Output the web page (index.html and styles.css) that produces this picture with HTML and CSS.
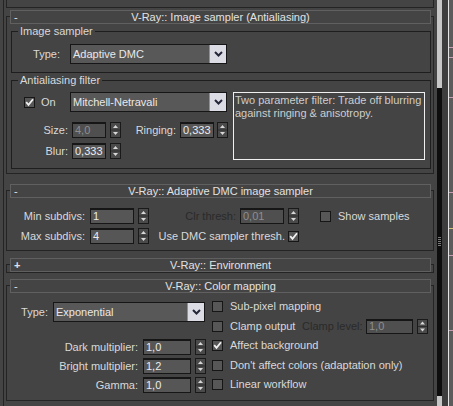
FILE: index.html
```html
<!DOCTYPE html>
<html>
<head>
<meta charset="utf-8">
<title>V-Ray rollouts</title>
<link rel="stylesheet" href="styles.css">
</head>
<body>
<div class="gutter"></div>
<div class="vline"></div>
<div class="panel">
  <div class="prev"></div>

  <section class="rollout r1">
    <div class="rtitle"><span class="sign">-</span><span>V-Ray:: Image sampler (Antialiasing)</span><span></span></div>
    <div class="group g1">
      <div class="glabel">Image sampler</div>
      <div class="row typerow">
        <span class="lbl l-type1">Type:</span>
        <div class="dd dd1"><span class="ddtext">Adaptive DMC</span><span class="ddbtn"><svg width="9" height="6" viewBox="0 0 9 6"><path d="M1 1 L4.5 4.5 L8 1" fill="none" stroke="#25253a" stroke-width="2"/></svg></span></div>
      </div>
    </div>
    <div class="group g2">
      <div class="glabel">Antialiasing filter</div>
      <div class="aa">
        <div class="aaleft">
          <div class="row onrow">
            <span class="cb cb-on"><svg width="9" height="9" viewBox="0 0 9 9"><path d="M1.2 4.2 L3.5 6.8 L8 1.2" fill="none" stroke="#f2f2f2" stroke-width="1.8"/></svg></span>
            <span class="onlbl">On</span>
            <div class="dd dd2"><span class="ddtext">Mitchell-Netravali</span><span class="ddbtn"><svg width="9" height="6" viewBox="0 0 9 6"><path d="M1 1 L4.5 4.5 L8 1" fill="none" stroke="#25253a" stroke-width="2"/></svg></span></div>
          </div>
          <div class="row numrow sizerow">
            <span class="lbl l-size">Size:</span>
            <span class="num dis w34">4,0</span>
            <svg class="spin sp-4" width="11" height="16" viewBox="0 0 11 16"><rect x="0.5" y="0.5" width="10" height="15" fill="#4a4a4a" stroke="#1a1a1a"/><line x1="1" y1="8" x2="10" y2="8" stroke="#2c2c2c"/><path d="M5.5 3 L8 6 L3 6 Z" fill="#d8d8d8"/><path d="M3 10 L8 10 L5.5 13 Z" fill="#d8d8d8"/></svg>
            <span class="lbl l-ring">Ringing:</span>
            <span class="num w34">0,333</span>
            <svg class="spin sp-3" width="11" height="16" viewBox="0 0 11 16"><rect x="0.5" y="0.5" width="10" height="15" fill="#4a4a4a" stroke="#1a1a1a"/><line x1="1" y1="8" x2="10" y2="8" stroke="#2c2c2c"/><path d="M5.5 3 L8 6 L3 6 Z" fill="#d8d8d8"/><path d="M3 10 L8 10 L5.5 13 Z" fill="#d8d8d8"/></svg>
          </div>
          <div class="row numrow blurrow">
            <span class="lbl l-size">Blur:</span>
            <span class="num w34">0,333</span>
            <svg class="spin sp-4" width="11" height="16" viewBox="0 0 11 16"><rect x="0.5" y="0.5" width="10" height="15" fill="#4a4a4a" stroke="#1a1a1a"/><line x1="1" y1="8" x2="10" y2="8" stroke="#2c2c2c"/><path d="M5.5 3 L8 6 L3 6 Z" fill="#d8d8d8"/><path d="M3 10 L8 10 L5.5 13 Z" fill="#d8d8d8"/></svg>
          </div>
        </div>
        <div class="desc">Two parameter filter: Trade off blurring<br>against ringing &amp; anisotropy.</div>
      </div>
    </div>
  </section>

  <section class="rollout r2">
    <div class="rtitle"><span class="sign">-</span><span>V-Ray:: Adaptive DMC image sampler</span><span></span></div>
    <div class="row numrow minrow">
      <span class="lbl l-sub">Min subdivs:</span>
      <span class="num w44">1</span>
      <svg class="spin sp-4" width="11" height="16" viewBox="0 0 11 16"><rect x="0.5" y="0.5" width="10" height="15" fill="#4a4a4a" stroke="#1a1a1a"/><line x1="1" y1="8" x2="10" y2="8" stroke="#2c2c2c"/><path d="M5.5 3 L8 6 L3 6 Z" fill="#d8d8d8"/><path d="M3 10 L8 10 L5.5 13 Z" fill="#d8d8d8"/></svg>
      <span class="lbl l-clr dislbl">Clr thresh:</span>
      <span class="num dis w44">0,01</span>
      <svg class="spin sp-4" width="11" height="16" viewBox="0 0 11 16"><rect x="0.5" y="0.5" width="10" height="15" fill="#4a4a4a" stroke="#1a1a1a"/><line x1="1" y1="8" x2="10" y2="8" stroke="#2c2c2c"/><path d="M5.5 3 L8 6 L3 6 Z" fill="#d8d8d8"/><path d="M3 10 L8 10 L5.5 13 Z" fill="#d8d8d8"/></svg>
      <span class="cb cb-show"></span>
      <span class="cblbl">Show samples</span>
    </div>
    <div class="row numrow maxrow">
      <span class="lbl l-sub">Max subdivs:</span>
      <span class="num w44">4</span>
      <svg class="spin sp-4" width="11" height="16" viewBox="0 0 11 16"><rect x="0.5" y="0.5" width="10" height="15" fill="#4a4a4a" stroke="#1a1a1a"/><line x1="1" y1="8" x2="10" y2="8" stroke="#2c2c2c"/><path d="M5.5 3 L8 6 L3 6 Z" fill="#d8d8d8"/><path d="M3 10 L8 10 L5.5 13 Z" fill="#d8d8d8"/></svg>
      <span class="lbl l-dmc">Use DMC sampler thresh.</span>
      <span class="cb cb-dmc"><svg width="9" height="9" viewBox="0 0 9 9"><path d="M1.2 4.2 L3.5 6.8 L8 1.2" fill="none" stroke="#f2f2f2" stroke-width="1.8"/></svg></span>
    </div>
  </section>

  <section class="rollout r3">
    <div class="rtitle"><span class="sign plus">+</span><span>V-Ray:: Environment</span><span></span></div>
  </section>

  <section class="rollout r4">
    <div class="rtitle"><span class="sign">-</span><span>V-Ray:: Color mapping</span><span></span></div>
    <div class="cm">
      <div class="cmleft">
        <div class="row typerow2">
          <span class="lbl l-type2">Type:</span>
          <div class="dd dd3"><span class="ddtext">Exponential</span><span class="ddbtn"><svg width="9" height="6" viewBox="0 0 9 6"><path d="M1 1 L4.5 4.5 L8 1" fill="none" stroke="#25253a" stroke-width="2"/></svg></span></div>
        </div>
        <div class="row numrow mrow first">
          <span class="lbl l-mult">Dark multiplier:</span>
          <span class="num w48">1,0</span>
          <svg class="spin sp-4" width="11" height="16" viewBox="0 0 11 16"><rect x="0.5" y="0.5" width="10" height="15" fill="#4a4a4a" stroke="#1a1a1a"/><line x1="1" y1="8" x2="10" y2="8" stroke="#2c2c2c"/><path d="M5.5 3 L8 6 L3 6 Z" fill="#d8d8d8"/><path d="M3 10 L8 10 L5.5 13 Z" fill="#d8d8d8"/></svg>
        </div>
        <div class="row numrow mrow">
          <span class="lbl l-mult">Bright multiplier:</span>
          <span class="num w48">1,2</span>
          <svg class="spin sp-4" width="11" height="16" viewBox="0 0 11 16"><rect x="0.5" y="0.5" width="10" height="15" fill="#4a4a4a" stroke="#1a1a1a"/><line x1="1" y1="8" x2="10" y2="8" stroke="#2c2c2c"/><path d="M5.5 3 L8 6 L3 6 Z" fill="#d8d8d8"/><path d="M3 10 L8 10 L5.5 13 Z" fill="#d8d8d8"/></svg>
        </div>
        <div class="row numrow mrow">
          <span class="lbl l-mult">Gamma:</span>
          <span class="num w48">1,0</span>
          <svg class="spin sp-4" width="11" height="16" viewBox="0 0 11 16"><rect x="0.5" y="0.5" width="10" height="15" fill="#4a4a4a" stroke="#1a1a1a"/><line x1="1" y1="8" x2="10" y2="8" stroke="#2c2c2c"/><path d="M5.5 3 L8 6 L3 6 Z" fill="#d8d8d8"/><path d="M3 10 L8 10 L5.5 13 Z" fill="#d8d8d8"/></svg>
        </div>
      </div>
      <div class="cmright">
        <div class="row crow"><span class="cb"></span><span class="cblbl">Sub-pixel mapping</span></div>
        <div class="row crow"><span class="cb"></span><span class="cblbl l-clampout">Clamp output</span><span class="lbl l-clamplvl dislbl">Clamp level:</span><span class="num dis w47 h15">1,0</span>
          <svg class="spin sp-4" width="11" height="15" viewBox="0 0 11 15"><rect x="0.5" y="0.5" width="10" height="14" fill="#4a4a4a" stroke="#1a1a1a"/><line x1="1" y1="7.5" x2="10" y2="7.5" stroke="#2c2c2c"/><path d="M5.5 2.5 L8 5.5 L3 5.5 Z" fill="#d8d8d8"/><path d="M3 9.5 L8 9.5 L5.5 12.5 Z" fill="#d8d8d8"/></svg>
        </div>
        <div class="row crow"><span class="cb"><svg width="9" height="9" viewBox="0 0 9 9"><path d="M1.2 4.2 L3.5 6.8 L8 1.2" fill="none" stroke="#f2f2f2" stroke-width="1.8"/></svg></span><span class="cblbl">Affect background</span></div>
        <div class="row crow"><span class="cb"></span><span class="cblbl">Don't affect colors (adaptation only)</span></div>
        <div class="row crow"><span class="cb"></span><span class="cblbl">Linear workflow</span></div>
      </div>
    </div>
  </section>
</div>
<div class="scroll"><div class="thumb"><div class="grip"></div></div></div>
<div class="sdark"></div>
<div class="swhite"></div>
<div class="sright"></div>
</body>
</html>
```

FILE: styles.css
```css
* { box-sizing: border-box; }
html, body { margin: 0; padding: 0; }
body {
  width: 453px;
  height: 406px;
  overflow: hidden;
  background: #444444;
  color: #d9d9d9;
  font-family: "Liberation Sans", Arial, sans-serif;
  font-size: 11px;
  line-height: 13px;
  display: flex;
}
.gutter { width: 3px; flex: none; }
.vline { width: 1px; flex: none; background: #242424; }
.panel { width: 433px; flex: none; padding-left: 2px; }

.prev {
  height: 8px;
  margin-right: 3px;
  border: 1px solid #242424;
  border-top: none;
}

.rollout { margin-right: 3px; border: 1px solid #242424; }
.r1 { margin-top: 8px; padding-bottom: 4px; }
.r2 { margin-top: 16px; padding-bottom: 6px; }
.r3 { margin-top: 13px; }
.r4 { margin-top: 12px; padding-bottom: 5px; }

.rtitle {
  height: 14px;
  margin: -7px 2px 0 3px;
  border: 1px solid #606060;
  background: #444444;
  display: grid;
  grid-template-columns: 1fr auto 1fr;
  line-height: 12px;
  color: #e2e2e2;
  white-space: nowrap;
}
.sign { padding-left: 3px; }
.plus { font-weight: bold; }

.group { border: 1px solid #1e1e1e; margin: 7px 2px 0 4px; padding-bottom: 8px; }
.glabel {
  margin: -7px 0 0 6px;
  padding: 0 2px;
  background: #444444;
  width: max-content;
  line-height: 13px;
}

.row { display: flex; align-items: center; white-space: nowrap; }
.lbl { text-align: right; flex: none; }
.dislbl { color: #2a2a2a; }

.typerow { margin-top: 6px; height: 20px; }
.l-type1 { width: 48px; margin-right: 10px; }

.dd {
  height: 20px;
  flex: none;
  display: flex;
  border: 1px solid #161616;
  background: #585858;
  color: #e8e8e8;
}
.ddtext { flex: 1; padding-left: 2px; line-height: 18px; }
.ddbtn {
  width: 17px;
  background: #dcdce4;
  border-left: 1px solid #909090;
  display: flex;
  align-items: center;
  justify-content: center;
}
.dd1, .dd2 { width: 157px; }
.dd3 { width: 152px; }

.aa { display: flex; margin-top: 5px; }
.aaleft { width: 216px; flex: none; }
.onrow { height: 20px; }
.cb {
  width: 11px;
  height: 11px;
  flex: none;
  background: #575757;
  border: 1px solid #161616;
  display: flex;
  align-items: center;
  justify-content: center;
}
.cb-on { margin-left: 12px; }
.onlbl { margin-left: 6px; width: 29px; flex: none; }

.numrow { height: 16px; }
.sizerow { margin-top: 10px; }
.blurrow { margin-top: 5px; }
.l-size { width: 56px; margin-right: 4px; }
.l-ring { width: 55px; margin-right: 4px; }

.num {
  height: 16px;
  flex: none;
  background: #565656;
  border: 1px solid #161616;
  border-top-width: 2px;
  padding-left: 2px;
  line-height: 12px;
  color: #ececec;
}
.num.dis { color: #8e8e8e; background: #4f4f4f; }
.h15 { height: 15px; line-height: 11px; }
.w34 { width: 34px; }
.w44 { width: 44px; }
.w47 { width: 47px; }
.w48 { width: 48px; }
.spin { flex: none; display: block; }
.sp-4 { margin-left: 4px; }
.sp-3 { margin-left: 3px; }

.desc {
  width: 192px;
  height: 68px;
  flex: none;
  margin-left: 5px;
  border: 1px solid #f0f0f0;
  padding: 1px 0 0 1px;
  color: #cdcdcd;
  white-space: nowrap;
}

.minrow { margin-top: 10px; }
.maxrow { margin-top: 4px; }
.l-sub { width: 78px; margin-right: 5px; }
.l-clr { width: 87px; margin-right: 4px; }
.cb-show { margin-left: 21px; }
.cblbl { margin-left: 7px; flex: none; }
.l-dmc { width: 136px; margin-right: 3px; }

.cm { display: flex; }
.cmleft { width: 199px; flex: none; padding-top: 9px; }
.typerow2 { height: 20px; }
.l-type2 { width: 41px; margin-right: 5px; }
.mrow { margin-top: 3px; }
.mrow.first { margin-top: 17px; }
.l-mult { width: 131px; margin-right: 5px; }

.cmright { margin-left: 6px; padding-top: 4px; flex: 1; }
.crow { height: 19.5px; }
.l-clampout { width: 72px; }
.l-clamplvl { width: 64px; text-align: left; }

.scroll { width: 5px; flex: none; background: #c6c6c6; }
.thumb {
  margin-top: 88px;
  height: 308px;
  background: #0d0d0d;
  display: flex;
  flex-direction: column;
  align-items: center;
}
.grip {
  margin-top: 149px;
  width: 3px;
  height: 9px;
  background: repeating-linear-gradient(#7a7a7a 0 1px, transparent 1px 2px);
}
.sdark { width: 6px; flex: none; background: #3d3d3d; }
.swhite { width: 1px; flex: none; background: #e4e4e4; }
.sright {
  width: 4px;
  flex: none;
  background:
    linear-gradient(to bottom,
      transparent 0 47px, #c89ab4 47px 48px,
      transparent 48px 57px, #c89ab4 57px 58px,
      transparent 58px 97px, #c89ab4 97px 98px,
      transparent 98px 192px, #c89ab4 192px 193px,
      transparent 193px 228px, #d8c070 228px 229px,
      transparent 229px 255px, #c89ab4 255px 256px,
      transparent 256px 330px, #c89ab4 330px 331px,
      transparent 331px),
    #5c5c5c;
}
```
